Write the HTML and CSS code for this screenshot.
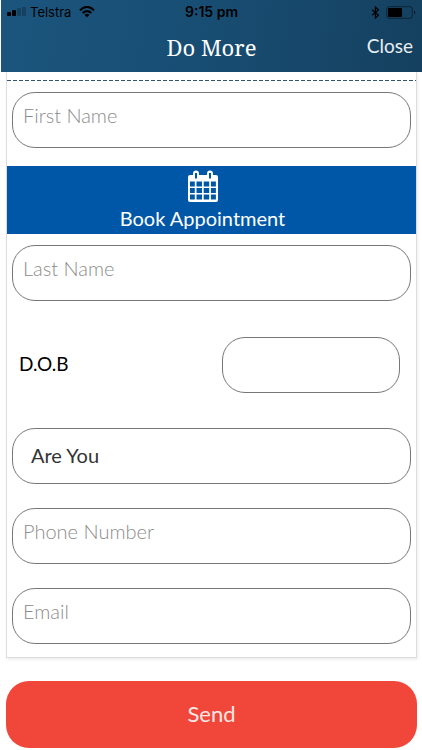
FILE: index.html
```html
<!DOCTYPE html>
<html lang="en">
<head>
<meta charset="utf-8">
<meta name="viewport" content="width=device-width, initial-scale=1">
<title>Do More</title>
<link rel="stylesheet" href="styles.css">
</head>
<body>
<header class="header">
  <div class="status">
    <div class="status-left">
      <svg class="signal" width="19" height="10" viewBox="0 0 19 10" aria-hidden="true">
        <rect x="0" y="5" width="4" height="4" rx="1"/>
        <rect x="5" y="3" width="4" height="6" rx="1"/>
        <g opacity=".22"><rect x="10" y="1" width="4" height="8" rx="1"/><rect x="15" y="0" width="4" height="9" rx="1"/></g>
      </svg>
      <span>Telstra</span>
      <svg class="wifi" width="16" height="12" viewBox="0 0 16 12" fill="none" stroke="currentColor" stroke-width="2.2" aria-hidden="true">
        <path d="M1 4.4C5-.2 11-.2 15 4.4M3.7 7.1c2.5-2.7 6.1-2.7 8.6 0"/>
        <path d="M8 11.4 5.5 8.8c1.4-1.4 3.6-1.4 5 0z" fill="currentColor" stroke="none"/>
      </svg>
    </div>
    <span class="time">9:15 pm</span>
    <div class="status-right">
      <svg width="9" height="13" viewBox="0 0 9 13" fill="none" stroke="currentColor" stroke-width="1.2" aria-hidden="true">
        <path d="M1 3.7 7.4 9 4.4 12V1l3 3L1 9.3"/>
      </svg>
      <svg width="30" height="13" viewBox="0 0 30 13" aria-hidden="true">
        <rect x=".7" y=".7" width="25.6" height="11.6" rx="2.5" fill="none" stroke="#000" stroke-opacity=".45"/>
        <rect x="2" y="2" width="14" height="9" rx="1"/>
        <path d="M28 4.5c2 .8 2 3.200 0 4z" opacity=".5"/>
      </svg>
    </div>
  </div>
  <div class="titlebar">
    <h1 class="title">Do More</h1>
    <button class="close" type="button">Close</button>
  </div>
</header>
<form class="form">
  <div class="card">
    <div class="divider"></div>
    <input class="field" type="text" placeholder="First Name" aria-label="First Name">
    <button class="book" type="button">
      <svg width="30" height="32" viewBox="0 0 30 32" aria-hidden="true">
        <path fill="#fff" fill-rule="evenodd" d="M2 5h3V3.500a3 3 0 0 1 6 0V5h8V3.500a3 3 0 0 1 6 0V5h3a2 2 0 0 1 2 2v23a2 2 0 0 1-2 2H2a2 2 0 0 1-2-2V7a2 2 0 0 1 2-2zM7 3v5.500h2V3zM21 3v5.500h2V3zM2 11.500v5h4.800v-5zM8.500 11.500v5h5.500v-5zM15.700 11.500v5h5.500v-5zM22.900 11.500v5h5v-5zM2 18v5h4.800v-5zM8.500 18v5h5.500v-5zM15.700 18v5h5.500v-5zM22.900 18v5h5v-5zM2 24.500v5h4.800v-5zM8.500 24.500v5h5.500v-5zM15.700 24.500v5h5.500v-5zM22.900 24.500v5h5v-5z"/>
      </svg>
      <span>Book Appointment</span>
    </button>
    <input class="field" type="text" placeholder="Last Name" aria-label="Last Name">
    <div class="dob">
      <label for="dob">D.O.B</label>
      <input class="field" id="dob" type="text">
    </div>
    <select class="field choice" aria-label="Are You"><option>Are You</option></select>
    <input class="field" type="tel" placeholder="Phone Number" aria-label="Phone Number">
    <input class="field email" type="email" placeholder="Email" aria-label="Email">
  </div>
  <button class="send" type="submit">Send</button>
</form>
</body>
</html>
```
FILE: styles.css
```css
* {
  box-sizing: border-box;
}

body {
  margin: 0;
  background: #fff;
  color: #000;
  font: 20px/24px Lato, "Open Sans", sans-serif;
}

button,
input,
select {
  font: inherit;
}

button {
  border: 0;
  padding: 0;
  color: #fff;
  cursor: pointer;
}

.header {
  height: 72px;
  margin-left: 1px;
  background: linear-gradient(100deg, #1b557d, #184e74 45%, #15405f);
}

.status {
  display: grid;
  grid-template-columns: 1fr auto 1fr;
  align-items: center;
  height: 24px;
  padding: 0 6px;
  font: 13px/24px Inter, sans-serif;
}

.status-left,
.status-right {
  display: flex;
  align-items: center;
}

.status-left {
  gap: 4px;
}

.wifi {
  margin-left: 4px;
}

.status-right {
  justify-content: flex-end;
  gap: 6px;
}

.time {
  font-size: 14px;
  font-weight: 600;
}

.titlebar {
  display: grid;
  grid-template-columns: 1fr auto 1fr;
  align-items: center;
  height: 46px;
  padding: 0 9px;
}

.title {
  grid-column: 2;
  margin: 0;
  color: #fff;
  font: 22px/28px "Noto Serif", "DejaVu Serif Condensed", "DejaVu Serif", serif;
}

.close {
  justify-self: end;
  padding-bottom: 2px;
  background: none;
  color: #e8eef3;
  font-size: 19px;
}

.form {
  padding: 0 5px 2px 6px;
}

.card {
  display: flex;
  flex-direction: column;
  padding-bottom: 13px;
  border: solid #ddd;
  border-width: 0 1px 1px;
  box-shadow: 1px 2px 3px #0001;
}

.divider {
  height: 9px;
  margin-bottom: 11px;
  background: repeating-linear-gradient(90deg, #355273 0 4px, #fff 4px 6px) bottom / 100% 1px no-repeat;
}

.field {
  height: 56px;
  margin: 0 5px;
  padding: 0 10px 10px;
  border: 1px solid #777;
  border-radius: 23px;
  background: #fff;
  color: #333;
  outline: 0;
}

.field::placeholder {
  color: #8c8c8c;
  font-weight: 300;
  opacity: 1;
}

.book {
  display: flex;
  flex-direction: column;
  align-items: center;
  gap: 4px;
  height: 68px;
  margin: 18px 0 11px;
  padding: 4px 18px 0 0;
  background: #0057a8;
}

.dob {
  display: flex;
  align-items: center;
  justify-content: space-between;
  margin: 36px 11px 35px 12px;
}

.dob label {
  padding-bottom: 2px;
  font-size: 19px;
}

.dob .field {
  width: 46%;
}

.choice {
  margin-bottom: 24px;
  padding: 0 18px 2px;
  appearance: none;
}

.email {
  margin-top: 24px;
}

.send {
  width: 100%;
  height: 67px;
  margin-top: 23px;
  padding-bottom: 2px;
  border-radius: 23px;
  background: #f1473a;
  color: #fde8e6;
  font-size: 22px;
}
```
